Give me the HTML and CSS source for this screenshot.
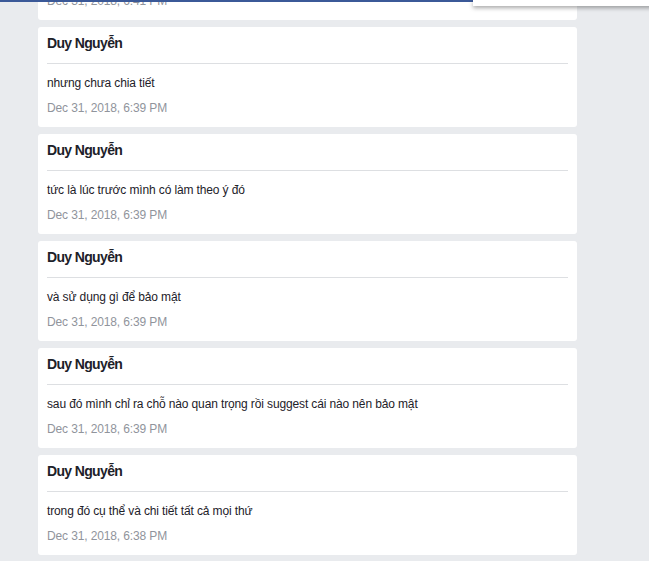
FILE: index.html
```html
<!DOCTYPE html>
<html lang="vi">
<head>
<meta charset="utf-8">
<title>Tin nhắn</title>
<link rel="stylesheet" href="styles.css">
</head>
<body>
<div class="topbar"></div>
<div class="dropdown"></div>
<main class="feed">
  <article class="card">
    <h3 class="name">Duy Nguyễn</h3>
    <p class="msg">chỉ cần nói tổng quát</p>
    <p class="date">Dec 31, 2018, 6:41 PM</p>
  </article>
  <article class="card">
    <h3 class="name">Duy Nguyễn</h3>
    <p class="msg">nhưng chưa chia tiết</p>
    <p class="date">Dec 31, 2018, 6:39 PM</p>
  </article>
  <article class="card">
    <h3 class="name">Duy Nguyễn</h3>
    <p class="msg">tức là lúc trước mình có làm theo ý đó</p>
    <p class="date">Dec 31, 2018, 6:39 PM</p>
  </article>
  <article class="card">
    <h3 class="name">Duy Nguyễn</h3>
    <p class="msg">và sử dụng gì để bảo mật</p>
    <p class="date">Dec 31, 2018, 6:39 PM</p>
  </article>
  <article class="card">
    <h3 class="name">Duy Nguyễn</h3>
    <p class="msg">sau đó mình chỉ ra chỗ nào quan trọng rồi suggest cái nào nên bảo mật</p>
    <p class="date">Dec 31, 2018, 6:39 PM</p>
  </article>
  <article class="card">
    <h3 class="name">Duy Nguyễn</h3>
    <p class="msg">trong đó cụ thể và chi tiết tất cả mọi thứ</p>
    <p class="date">Dec 31, 2018, 6:38 PM</p>
  </article>
</main>
</body>
</html>
```
FILE: styles.css
```css
html, body {
  margin: 0;
  padding: 0;
  height: 100%;
  overflow: hidden;
}
body {
  background: #e9ebee;
  font-family: "Liberation Sans", Arial, sans-serif;
  color: #1d2129;
}
.topbar {
  position: absolute;
  top: 0;
  left: 0;
  width: 475px;
  height: 2px;
  background: #3b5998;
  z-index: 2;
}
.dropdown {
  position: absolute;
  top: 0;
  left: 473px;
  width: 190px;
  height: 6px;
  background: #fff;
  box-shadow: 0 2px 4px rgba(0, 0, 0, 0.35);
  z-index: 3;
}
.feed {
  margin-top: -80px;
  margin-left: 38px;
  width: 539px;
  display: flex;
  flex-direction: column;
  gap: 7px;
}
.card {
  background: #fff;
  border-radius: 3px;
  padding: 8px 9px 11px 9px;
  height: 100px;
  box-sizing: border-box;
}
.name {
  margin: 0;
  font-size: 14px;
  font-weight: bold;
  letter-spacing: -0.65px;
  line-height: 16px;
  padding-bottom: 12px;
  border-bottom: 1px solid #dddfe2;
  color: #1d2129;
}
.msg {
  margin: 11px 0 0;
  font-size: 12px;
  letter-spacing: -0.13px;
  line-height: 16px;
  color: #1d2129;
}
.date {
  margin: 9px 0 0;
  font-size: 12px;
  letter-spacing: -0.13px;
  line-height: 16px;
  color: #90949c;
}
```
